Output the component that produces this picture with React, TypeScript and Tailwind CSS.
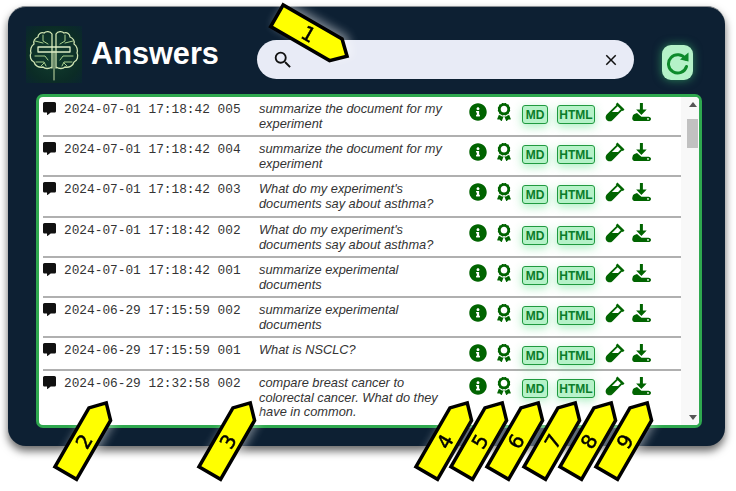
import { FaCommentAlt, FaInfoCircle, FaAward, FaVial } from "react-icons/fa";
import { MdSearch, MdClose } from "react-icons/md";

const rows = [
  { ts: "2024-07-01 17:18:42 005", q: "summarize the document for my experiment", h: "h-[40px]" },
  { ts: "2024-07-01 17:18:42 004", q: "summarize the document for my experiment", h: "h-[40px]" },
  { ts: "2024-07-01 17:18:42 003", q: "What do my experiment's documents say about asthma?", h: "h-[41px]" },
  { ts: "2024-07-01 17:18:42 002", q: "What do my experiment's documents say about asthma?", h: "h-[40px]" },
  { ts: "2024-07-01 17:18:42 001", q: "summarize experimental documents", h: "h-[40px]" },
  { ts: "2024-06-29 17:15:59 002", q: "summarize experimental documents", h: "h-[40px]" },
  { ts: "2024-06-29 17:15:59 001", q: "What is NSCLC?", h: "h-[33px]" },
  { ts: "2024-06-29 12:32:58 002", q: "compare breast cancer to colorectal cancer. What do they have in common.", h: "h-[58px]" },
];

function DownloadIcon() {
  return (
    <svg width="19" height="18" viewBox="0 0 19 18" fill="#006400">
      <path d="M7.900 0h3v6.500h3.800L9.400 12 4.100 6.500h3.800z" />
      <path d="M0.500 14c0-1.500 1-2.400 2-2.900l2.500-1 4.400 3.700h7.100c1.400 0 2.500 1 2.500 2.100s-1.100 2.100-2.500 2.100H2.500C1 18-.5 16 .5 14z" />
      <circle cx="16" cy="15.900" r="0.900" fill="#fff" />
    </svg>
  );
}

function RefreshIcon() {
  return (
    <svg width="24" height="24" viewBox="0 0 24 24" fill="none">
      <path d="M19.500 8A9.200 9.200 0 1 0 20.500 15.500" stroke="#0d8a2a" strokeWidth="3" strokeLinecap="round" />
      <path d="M14 8.500L22.500 1.500V10.500z" fill="#0d8a2a" />
    </svg>
  );
}

function Arrow({ x, y, n, angle }: { x: number; y: number; n: number; angle: number }) {
  return (
    <svg
      className="absolute pointer-events-none drop-shadow-[4px_-2px_5px_rgba(255,255,255,0.45)]"
      style={{ left: x, top: y, overflow: "visible" }}
      width="1"
      height="1"
    >
      <g transform={`rotate(${angle})`}>
        <polygon
          points="-12.500,40.500 12.500,40.500 12.500,-27.500 0,-40.500 -12.500,-27.500"
          fill="#ffff00"
          stroke="#000"
          strokeWidth="3.500"
          strokeLinejoin="miter"
        />
        <text
          x="-4"
          y="0"
          transform="rotate(-90)"
          textAnchor="middle"
          dominantBaseline="central"
          fontFamily="'DejaVu Sans', sans-serif"
          fontSize="20"
          fill="#000"
          stroke="#000"
          strokeWidth="0.500"
        >
          {n}
        </text>
      </g>
    </svg>
  );
}

function Logo() {
  return (
    <div className="w-[56px] h-[57px] bg-[radial-gradient(circle,#13402f_0%,#0b2c26_70%,#0a2530_100%)] flex items-center justify-center">
      <svg width="52" height="56" viewBox="0 0 52 56" fill="none" stroke="#a9cf8e" strokeWidth="1.300" strokeLinecap="round" strokeLinejoin="round">
        <path d="M26 53V24" stroke="#c8dfa8" strokeWidth="1" />
        <path d="M24 41V7c-2-3-6-3-8-1-3-1-6 1-6 4-3 1-5 4-4 7-3 2-4 6-3 9-2 3 0 8 3 9 1 4 5 6 9 5 2 2 6 2 9 0z" stroke="#cfe3b2" />
        <path d="M28 41V7c2-3 6-3 8-1 3-1 6 1 6 4 3 1 5 4 4 7 3 2 4 6 3 9 2 3 0 8-3 9-1 4-5 6-9 5-2 2-6 2-9 0z" stroke="#cfe3b2" />
        <path d="M10 20h32v5H10z" stroke="#dcebc5" />
        <path d="M15 8v6l5 3M37 8v6l-5 3M7 14l8 2M45 14l-8 2" strokeWidth="1" />
        <path d="M7 29h10l3 4M45 29H35l-3 4M8 35l8 0 2 4M44 35l-8 0-2 4M13 39l3-3M39 39l-3-3" strokeWidth="1" />
      </svg>
    </div>
  );
}

const chip =
  "mt-[4px] h-[19px] rounded-[3px] border border-[#1f9a3f] bg-[#b5f2c8] shadow-[0_3px_10px_rgba(70,220,120,0.45)] text-[12px] font-bold flex items-center justify-center text-[#0b7d2a]";

export default function App() {
  return (
    <div className="relative w-[736px] h-[491px] bg-white pt-[6px] pl-[8px] overflow-hidden font-['Liberation_Sans',sans-serif]">
      <div className="w-[717px] h-[440px] rounded-[18px] bg-[#0d2033] border-t border-[#8a8f94] shadow-[0_5px_8px_rgba(0,0,0,0.6)] flex flex-col">
        <header className="h-[87px] shrink-0 flex items-start pl-[18px]">
          <div className="mt-[19px]">
            <Logo />
          </div>
          <h1 className="ml-[9px] mt-[29px] w-[128px] text-[30.7px] leading-[36px] font-bold text-white">
            Answers
          </h1>
          <div className="ml-[38px] mt-[33px] w-[377px] h-[39px] rounded-full bg-[#e8ebf6] flex items-center justify-between px-[15px] text-[#111]">
            <MdSearch size={22} />
            <MdClose size={18} className="mr-[-1px]" />
          </div>
          <button className="ml-[28px] mt-[38px] w-[31px] h-[35px] rounded-[9px] bg-[#b5f2c8] shadow-[0_0_10px_rgba(70,220,120,0.55)] flex items-center justify-center">
            <RefreshIcon />
          </button>
        </header>
        <div className="ml-[28px] w-[666px] h-[334px] rounded-[7px] border-[3px] border-[#2fa84f] bg-white flex overflow-hidden">
          <div className="flex-1 min-w-0 pl-[4px]">
            {rows.map((r, i) => (
              <div
                key={i}
                className={`${r.h} flex items-start pt-[4px] ${i < 7 ? "border-b-2 border-[#b0b0b0]" : ""} box-border`}
              >
                <FaCommentAlt size={13} className="mt-[1px] text-[#111] shrink-0" />
                <span className="ml-[8px] mt-[1px] w-[195px] shrink-0 font-['Liberation_Mono',monospace] text-[12.8px] leading-[15px] text-[#333] whitespace-pre">
                  {r.ts}
                </span>
                <span className="w-[200px] shrink-0 text-[12.8px] leading-[14.5px] italic text-[#333] mt-[1px] pr-[8px]">
                  {r.q}
                </span>
                <div className="flex items-start text-[#006400] ml-[10px]">
                  <FaInfoCircle size={18} className="mt-[2px]" />
                  <FaAward size={18} className="ml-[8px] mt-[2px]" />
                  <span className={`${chip} ml-[9px] w-[26px]`}>MD</span>
                  <span className={`${chip} ml-[9px] w-[38px]`}>HTML</span>
                  <FaVial size={20} className="ml-[10px] mt-[1px]" />
                  <span className="ml-[7px] mt-[2px]">
                    <DownloadIcon />
                  </span>
                </div>
              </div>
            ))}
          </div>
          <div className="w-[18px] shrink-0 bg-[#f8f8f8] flex flex-col items-center justify-between py-[5px] pl-[5px] relative">
            <div className="w-0 h-0 border-x-[4px] border-x-transparent border-b-[5px] border-b-[#555]" />
            <div className="absolute top-[22px] left-[6px] w-[11px] h-[29px] bg-[#c1c1c1]" />
            <div className="w-0 h-0 border-x-[4px] border-x-transparent border-t-[5px] border-t-[#555]" />
          </div>
        </div>
      </div>
      <Arrow x={312} y={36} n={1} angle={120} />
      <Arrow x={86} y={438} n={2} angle={30} />
      <Arrow x={230} y={438} n={3} angle={30} />
      <Arrow x={447} y={438} n={4} angle={30} />
      <Arrow x={482} y={438} n={5} angle={30} />
      <Arrow x={518} y={438} n={6} angle={30} />
      <Arrow x={555} y={438} n={7} angle={30} />
      <Arrow x={591} y={438} n={8} angle={30} />
      <Arrow x={627} y={438} n={9} angle={30} />
    </div>
  );
}
